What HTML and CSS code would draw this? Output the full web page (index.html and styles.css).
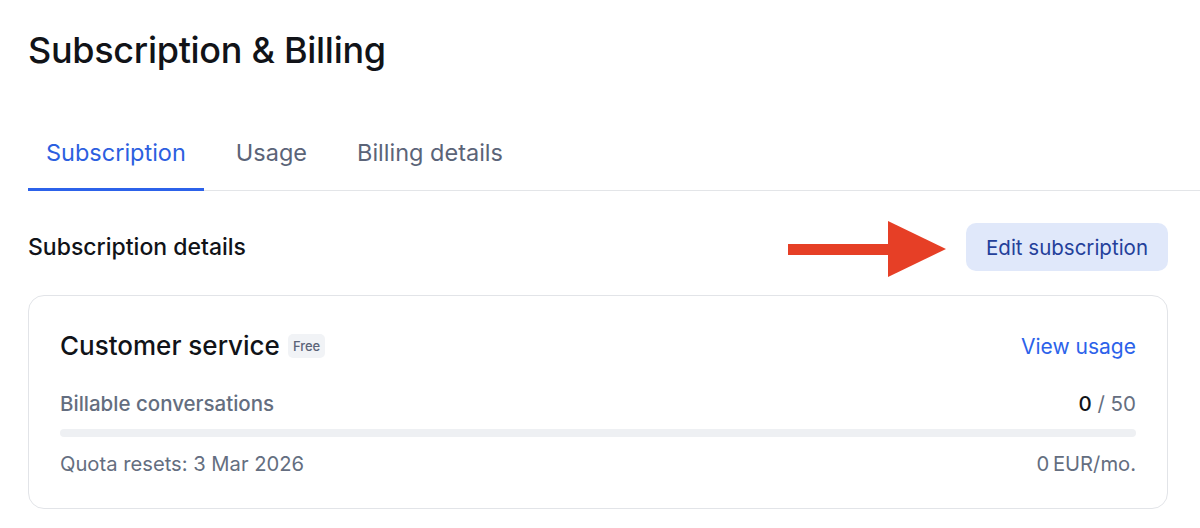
FILE: index.html
```html
<!DOCTYPE html>
<html lang="en">
<head>
<meta charset="utf-8">
<title>Subscription &amp; Billing</title>
<link rel="stylesheet" href="styles.css">
</head>
<body>
<main class="page">
  <h1 class="title">Subscription &amp; Billing</h1>
  <nav class="tabs">
    <a class="tab active">Subscription</a>
    <a class="tab">Usage</a>
    <a class="tab">Billing details</a>
  </nav>
  <section class="section">
    <div class="section-head">
      <h2 class="section-title">Subscription details</h2>
      <div class="actions">
        <span class="arrow" aria-hidden="true">
          <svg width="160" height="58" viewBox="0 0 160 58">
            <rect x="0" y="23" width="104" height="11" fill="#e63f26"/>
            <polygon points="100,0 158,28 100,56" fill="#e63f26"/>
          </svg>
        </span>
        <button class="btn">Edit subscription</button>
      </div>
    </div>
    <div class="card">
      <div class="card-row">
        <div class="plan">
          <span class="plan-name">Customer service</span>
          <span class="badge">Free</span>
        </div>
        <a class="link">View usage</a>
      </div>
      <div class="meter-row">
        <span class="muted strong">Billable conversations</span>
        <span class="count"><b>0</b> / 50</span>
      </div>
      <div class="bar"><div class="bar-fill" style="width:0%"></div></div>
      <div class="meter-row foot">
        <span class="muted">Quota resets: 3 Mar 2026</span>
        <span class="muted">0&#8239;EUR/mo.</span>
      </div>
    </div>
  </section>
</main>
</body>
</html>
```
FILE: styles.css
```css
* { box-sizing: border-box; }
html, body { margin: 0; padding: 0; background: #fff; }
body {
  font-family: Inter, "Noto Sans", "Liberation Sans", sans-serif;
  color: #111318;
}
.page { padding: 26px 0 0 28px; }
.title {
  margin: 0;
  font-size: 36px;
  font-weight: 500;
  letter-spacing: -0.3px;
  line-height: 48px;
}
.tabs {
  margin-top: 64px;
  display: flex;
  gap: 14px;
  border-bottom: 1px solid #e3e5e8;
}
.tab {
  padding: 0 18px 20px;
  font-size: 23.5px;
  line-height: 30px;
  color: #5b6478;
  border-bottom: 3px solid transparent;
  margin-bottom: -1px;
}
.tab.active { color: #2c5fe0; border-bottom-color: #2c62ea; }
.section { padding-right: 32px; }
.section-head {
  margin-top: 24px;
  display: flex;
  align-items: center;
  justify-content: space-between;
}
.section-title { margin: 0; font-size: 23px; font-weight: 500; }
.actions { display: flex; align-items: center; gap: 18px; }
.arrow { display: flex; margin-top: 6px; }
.btn {
  font: inherit;
  font-size: 20.5px;
  color: #24409a;
  background: #e0e8fa;
  border: 0;
  border-radius: 10px;
  height: 48px;
  padding: 0 20px;
}
.card {
  margin-top: 16px;
  border: 1px solid #e2e4e8;
  border-radius: 16px;
  padding: 30px 31px 32px;
}
.card-row, .meter-row {
  display: flex;
  align-items: center;
  justify-content: space-between;
}
.plan { display: flex; align-items: center; gap: 8px; }
.plan-name { font-size: 26px; font-weight: 500; line-height: 40px; }
.badge {
  font-size: 13px;
  font-weight: 500;
  color: #5b6478;
  background: #f1f3f6;
  border-radius: 5px;
  padding: 4px 5px;
}
.link { font-size: 21px; color: #2c62ea; }
.meter-row { margin-top: 26px; font-size: 20.5px; line-height: 24px; }
.muted { color: #646e80; }
.strong { font-weight: 500; }
.count { color: #646e80; }
.count b { color: #111318; font-weight: 500; }
.bar { margin-top: 13px; height: 8px; border-radius: 4px; background: #eef0f3; }
.bar-fill { height: 100%; background: #2c62ea; border-radius: 4px; }
.foot { margin-top: 15px; font-size: 20.2px; }
```
